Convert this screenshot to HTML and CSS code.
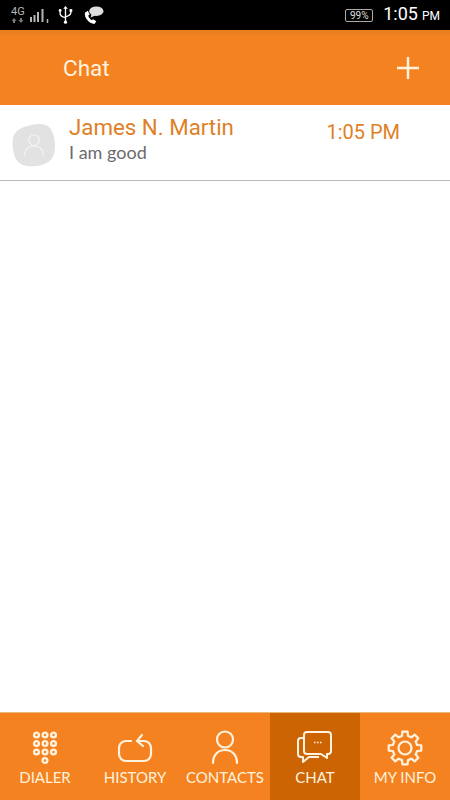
FILE: index.html
```html
<!DOCTYPE html>
<html lang="en">
	<head>
		<meta charset="utf-8">
		<meta name="viewport" content="width=device-width, initial-scale=1.0">
		<title>Chat</title>
		<link rel="stylesheet" href="styles.css">
	</head>
	<body>
		<div class="statusbar">
			<div class="status-left">
				<div class="net">
					<span>4G</span>
					<svg width="13" height="5" viewBox="0 0 13 5">
						<path d="M3 0l2.500 3H4v2H2V3H.5zM10 5L7.500 2H9V0h2v2h1.500z" fill="#777"/>
					</svg>
				</div>
				<svg class="sig" width="20" height="15" viewBox="0 0 20 15">
					<path d="M1 9v5M4.500 7v7M8 4v10M12.500 1v13" stroke="#b5b5b5" stroke-width="2" fill="none"/>
					<path d="M17.500 11v4" stroke="#b5b5b5" stroke-width="1.500" fill="none"/>
				</svg>
				<svg class="usb" width="17" height="18" viewBox="0 0 16 20">
					<path d="M8 2v17M2 6v2c0 3 2 4 6 5M14 6v1c0 3-2 4-6 5" stroke="#fff" stroke-width="1.500" fill="none"/>
					<path d="M8 0l2.500 3h-5z" fill="#fff"/>
					<circle cx="2" cy="5" r="1.600" fill="#fff"/>
					<rect x="12.500" y="3.500" width="3" height="3" fill="#fff"/>
					<circle cx="8" cy="18" r="1.800" fill="#fff"/>
				</svg>
				<svg class="call" width="21" height="19" viewBox="0 0 22 20">
					<path d="M2 7C1 12 6 18 12 19l2-3-3.500-2-1.500 1C7.500 14 5.500 11.500 5.500 10l1.500-1L5 5z" fill="#fff"/>
					<ellipse cx="14" cy="5.500" rx="7.500" ry="5" fill="#ddd"/>
					<path d="M9 8l-1 4 5-2z" fill="#ddd"/>
				</svg>
			</div>
			<div class="status-right">
				<span class="battery">99%</span>
				<span class="clock">1:05<small>PM</small></span>
			</div>
		</div>

		<header class="topbar">
			<h1>Chat</h1>
			<svg class="plus" width="24" height="24" viewBox="0 0 24 24">
				<path d="M12 1v22M1 12h22" stroke="#fff3df" stroke-width="2.500" fill="none"/>
			</svg>
		</header>

		<main class="list">
			<div class="chat-row">
				<svg class="avatar" width="44" height="44" viewBox="0 0 46 46">
					<path d="M20 2C28 0 38 1 41 7c4 7 5 18 3 25-2 8-9 12-18 13C17 46 9 45 5 39 1 33 0 23 1 16 2 8 11 4 20 2z" fill="#e2e2e2"/>
					<circle cx="23" cy="18" r="5.500" fill="none" stroke="#f5f5f5" stroke-width="1.200"/>
					<path d="M13 34c0-6 4-10 10-10s10 4 10 10" fill="none" stroke="#f5f5f5" stroke-width="1.200"/>
				</svg>
				<div class="chat-text">
					<div class="chat-name">James N. Martin</div>
					<div class="chat-msg">I am good</div>
				</div>
				<div class="chat-time">1:05 PM</div>
			</div>
		</main>

		<nav class="tabs">
			<div class="tab">
				<svg width="36" height="36" viewBox="0 0 36 36" fill="none" stroke="#fff3df" stroke-width="2.400">
					<circle cx="9.500" cy="5" r="2.400"/><circle cx="18" cy="5" r="2.400"/><circle cx="26.500" cy="5" r="2.400"/>
					<circle cx="9.500" cy="13.500" r="2.400"/><circle cx="18" cy="13.500" r="2.400"/><circle cx="26.500" cy="13.500" r="2.400"/>
					<circle cx="9.500" cy="22" r="2.400"/><circle cx="18" cy="22" r="2.400"/><circle cx="26.500" cy="22" r="2.400"/>
					<circle cx="18" cy="30.500" r="2.400"/>
				</svg>
				<span>DIALER</span>
			</div>
			<div class="tab">
				<svg width="36" height="36" viewBox="0 0 36 36" fill="none" stroke="#fff3df" stroke-width="2.200" stroke-linecap="round" stroke-linejoin="round">
					<path d="M14 11H9a7 7 0 0 0-7 7v6a7 7 0 0 0 7 7h18a7 7 0 0 0 7-7v-6a7 7 0 0 0-7-7h-7"/>
					<path d="M25 5l-5 6 6 5"/>
				</svg>
				<span>HISTORY</span>
			</div>
			<div class="tab">
				<svg width="36" height="36" viewBox="0 0 36 36" fill="none" stroke="#fff3df" stroke-width="2.200" stroke-linecap="round">
					<circle cx="18" cy="9.500" r="8"/>
					<path d="M6 33c0-8 5-13 12-13s12 5 12 13"/>
				</svg>
				<span>CONTACTS</span>
			</div>
			<div class="tab active">
				<svg width="36" height="36" viewBox="0 0 36 36" fill="none" stroke="#fff3df" stroke-width="2" stroke-linejoin="round">
					<path d="M10 2h21a3 3 0 0 1 3 3v16a3 3 0 0 1-3 3h-1v4l-6-4H10a3 3 0 0 1-3-3V5a3 3 0 0 1 3-3z"/>
					<path d="M7 8H4a3 3 0 0 0-3 3v13a3 3 0 0 0 3 3h2v5l6-5h10"/>
					<path d="M17 12.500h1.500M20 12.500h1.500M23 12.500h1.500" stroke-width="1.400"/>
				</svg>
				<span>CHAT</span>
			</div>
			<div class="tab">
				<svg width="36" height="36" viewBox="0 0 36 36" fill="none" stroke="#fff3df" stroke-width="2.200" stroke-linejoin="round">
					<path d="M14.980 5.870L15.420 1.700H20.580L21.020 5.870L24.440 7.290L27.700 4.650L31.350 8.300L28.710 11.560L30.130 14.980L34.300 15.420V20.580L30.130 21.020L28.710 24.440L31.350 27.700L27.700 31.350L24.440 28.710L21.020 30.130L20.580 34.300H15.420L14.980 30.130L11.560 28.710L8.300 31.350L4.650 27.700L7.290 24.440L5.870 21.020L1.700 20.580V15.420L5.870 14.980L7.290 11.560L4.650 8.300L8.300 4.650L11.560 7.290Z"/>
					<circle cx="18" cy="18" r="6.500"/>
				</svg>
				<span>MY INFO</span>
			</div>
		</nav>
	</body>
</html>
```

FILE: styles.css
```css
* {
	box-sizing: border-box;
}

body {
	margin: 0;
	height: 800px;
	display: flex;
	flex-direction: column;
	background: #fff;
	overflow: hidden;
	font-family: "Lato", sans-serif;
}

.statusbar {
	height: 30px;
	flex: none;
	background: #000;
	display: flex;
	justify-content: space-between;
	align-items: center;
	padding: 0 10px 0 11px;
}

.status-left {
	display: flex;
	align-items: center;
}

.net {
	width: 19px;
	display: flex;
	flex-direction: column;
	font: 11px/10px "Roboto", sans-serif;
	color: #b5b5b5;
}

.net svg {
	display: block;
	margin-top: 1px;
}

.sig {
	margin-right: 7px;
	margin-top: 1px;
}

.usb {
	margin-right: 9px;
}

.status-right {
	display: flex;
	align-items: center;
}

.battery {
	width: 28px;
	height: 13px;
	margin-right: 10px;
	border: 1px solid #aaa;
	border-radius: 2px;
	font: 10px/11px "Roboto", sans-serif;
	color: #ddd;
	text-align: center;
}

.clock {
	font: 400 18px/24px "Roboto", sans-serif;
	color: #fff;
}

.clock small {
	font-size: 12px;
	margin-left: 4px;
}

.topbar {
	height: 75px;
	flex: none;
	background: linear-gradient(#e27d20, #f58220 6px);
	display: flex;
	justify-content: space-between;
	align-items: center;
	padding: 0 30px 0 63px;
}

.topbar h1 {
	margin: 0;
	font: 400 22.5px/28px "Roboto", sans-serif;
	color: #fff3df;
}

.list {
	flex: 1;
}

.chat-row {
	height: 76px;
	display: flex;
	align-items: flex-start;
	border-bottom: 1px solid #bbb;
	padding: 8px 50px 0 12px;
}

.avatar {
	flex: none;
	margin-top: 10px;
}

.chat-text {
	flex: 1;
	margin-left: 13px;
}

.chat-name {
	font: 400 22.3px/28px "Roboto", sans-serif;
	color: #df8026;
}

.chat-msg {
	font: 400 18px/22px "Lato", sans-serif;
	color: #6b6b6b;
}

.chat-time {
	font: 400 20px/24px "Roboto", sans-serif;
	color: #df8026;
	margin-top: 7px;
}

.tabs {
	height: 88px;
	flex: none;
	display: grid;
	grid-template-columns: repeat(5, 1fr);
	background: #f58220;
	border-top: 1px solid #e9b878;
}

.tab {
	display: flex;
	flex-direction: column;
	align-items: center;
	padding-top: 17px;
	font-size: 15px;
	line-height: 20px;
	color: #fff3df;
}

.tab svg {
	margin-bottom: 1px;
}

.tab.active {
	background: #cc6404;
}
```
